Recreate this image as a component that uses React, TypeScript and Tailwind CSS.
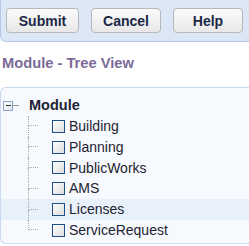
const modules = ["Building", "Planning", "PublicWorks", "AMS", "Licenses", "ServiceRequest"];

function ToolButton({ label, width }: { label: string; width: string }) {
    return (
        <button
            className={`${width} h-[25px] rounded-[4px] border border-[#b8b8b8] bg-gradient-to-b from-[#fbfbfb] to-[#e8e8e8] text-[14px] font-bold leading-none text-[#1b2846]`}
        >
            {label}
        </button>
    );
}

export default function App() {
    return (
        <div className="w-[249px] h-[246px] overflow-hidden bg-white font-['Liberation_Sans',Arial,sans-serif]">
            <div className="h-[42px] flex gap-[12px] pl-[5px] pt-[8px] bg-[#dce7f5] border-l border-b border-[#b3c9e6] rounded-bl-[6px]">
                <ToolButton label="Submit" width="w-[73px]" />
                <ToolButton label="Cancel" width="w-[70px]" />
                <ToolButton label="Help" width="w-[70px]" />
            </div>

            <h2 className="mt-[12px] mb-[15px] pl-[2px] text-[14.7px] leading-[18px] font-bold text-[#7a6a97]">
                Module - Tree View
            </h2>

            <div className="h-[157px] pt-[7px] bg-[#f6f9fd] border-t border-l border-b border-[#c9daf0] rounded-l-[6px]">
                <div className="h-[21px] flex items-center">
                    <div className="ml-[2px] w-[10px] h-[10px] flex items-center justify-center border border-[#8ea5c6] bg-gradient-to-br from-white to-[#dde5f0]">
                        <div className="w-[5px] h-[1px] bg-[#333]" />
                    </div>
                    <div className="w-[6px] h-[1px] bg-[#9a9a9a]" />
                    <span className="ml-[10px] text-[14.5px] font-bold text-[#1c2436]">Module</span>
                </div>

                {modules.map((name, i) => {
                    const last = i === modules.length - 1;
                    return (
                        <div
                            key={name}
                            className={`h-[20.8px] flex items-stretch ${name === "Licenses" ? "bg-[#e8f0fa]" : ""}`}
                        >
                            <div className="w-[27px]" />
                            <div className="w-[10px] flex flex-col">
                                <div className="h-1/2 border-l border-b border-dotted border-[#a8a8a8]" />
                                <div className={`h-1/2 ${last ? "" : "border-l border-dotted border-[#a8a8a8]"}`} />
                            </div>
                            <div className="ml-[14px] flex items-center">
                                <div className="w-[13px] h-[13px] border border-[#1f4f85] bg-gradient-to-br from-white to-[#dcdcdc]" />
                                <span className="ml-[4px] text-[14px] text-[#1e2230]">{name}</span>
                            </div>
                        </div>
                    );
                })}
            </div>
        </div>
    );
}
